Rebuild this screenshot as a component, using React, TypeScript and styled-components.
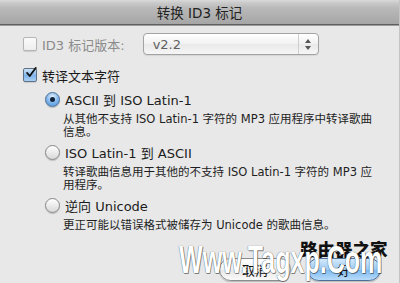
import React from "react";
import styled, { createGlobalStyle } from "styled-components";

const GlobalStyle = createGlobalStyle`
html,body{margin:0;padding:0;background:#e8e8e8;}
body{font-family:"DejaVu Sans","Noto Sans CJK SC",sans-serif;color:#1b1b1b;}
`
const Window = styled.div`
position:relative;
width:400px;
height:283px;
overflow:hidden;
background:#e8e8e8;
border-right:1px solid #c4c4c4;
box-sizing:border-box;
`
const TitleBar = styled.div`
height:24px;
display:flex;
align-items:center;
justify-content:center;
font-size:13.5px;
color:#222;
background:linear-gradient(#d9d9d9 0,#c9c9c9 3px,#b9b9b9 8px,#a6a6a6 100%);
border-bottom:1px solid #5e5e5e;
box-shadow:0 1px 0 #9c9c9c;
`
const Body = styled.div`
display:flex;
flex-direction:column;
padding:8px 0 0 23px;
`
const Row = styled.div<{gap?:number;top?:number}>`
display:flex;
align-items:center;
height:${p=>p.gap?22:18}px;
margin-top:${p=>p.top||0}px;
font-size:13px;
`
const Label = styled.span<{disabled?:boolean}>`
margin-left:5px;
color:${p=>p.disabled?'#8b8b8b':'#1b1b1b'};
`
const Box = styled.span<{disabled?:boolean;checked?:boolean}>`
width:14px;
height:14px;
box-sizing:border-box;
border-radius:2px;
display:inline-flex;
align-items:center;
justify-content:center;
border:1px solid ${p=>p.disabled?'#b5b5b5':'#5f6f86'};
background:${p=>p.checked?'linear-gradient(#cfe4fa,#7eb4ea 55%,#a9d0f5)':p.disabled?'linear-gradient(#fafafa,#eeeeee)':'linear-gradient(#ffffff,#e4e4e4)'};
box-shadow:0 1px 1px rgba(0,0,0,.12);
`
const Select = styled.div`
margin-left:18px;
width:176px;
height:22px;
box-sizing:border-box;
border:1px solid #a3a3a3;
border-radius:4px;
background:linear-gradient(#ffffff,#f1f1f1 50%,#e9e9e9 51%,#f6f6f6);
display:flex;
align-items:center;
color:#5f5f5f;
font-size:13px;
box-shadow:0 1px 1px rgba(0,0,0,.08);
`
const SelectValue = styled.span`
flex:1;
padding-left:9px;
`
const Stepper = styled.span`
width:19px;
height:100%;
border-left:1px solid #cfcfcf;
display:flex;
align-items:center;
justify-content:center;
`
const Options = styled.div`
display:flex;
flex-direction:column;
padding-left:22px;
`
const Radio = styled.span<{selected?:boolean}>`
width:15px;
height:15px;
box-sizing:border-box;
border-radius:50%;
display:inline-flex;
align-items:center;
justify-content:center;
border:1px solid ${p=>p.selected?'#4d6f95':'#878787'};
background:${p=>p.selected?'radial-gradient(circle at 50% 30%,#e3f0fc,#74aee9 60%,#4c8fd8)':'linear-gradient(#ffffff,#d8d8d8)'};
box-shadow:0 1px 1px rgba(0,0,0,.18);
&::after{
  content:'';
  width:5px;
  height:5px;
  border-radius:50%;
  background:#10233c;
  display:${p=>p.selected?'block':'none'};
}
`
const Desc = styled.div<{top:number}>`
margin:${p=>p.top}px 0 0 18px;
font-size:11.5px;
line-height:13px;
width:320px;
color:#1e1e1e;
`
const Footer = styled.div`
display:flex;
justify-content:flex-end;
gap:16px;
padding-right:18px;
margin-top:26px;
`
const Button = styled.div<{primary?:boolean}>`
width:${p=>p.primary?74:72}px;
height:23px;
box-sizing:border-box;
border-radius:12px;
border:1px solid ${p=>p.primary?'#4f6f97':'#8c8c8c'};
background:${p=>p.primary?'linear-gradient(#d5e9fb,#9ccbf3 50%,#7bb8ef 51%,#b8dcfa)':'linear-gradient(#ffffff,#f2f2f2 50%,#e6e6e6 51%,#fafafa)'};
display:flex;
align-items:center;
justify-content:center;
font-size:13px;
color:#111;
box-shadow:0 1px 1px rgba(0,0,0,.2);
`
const MarkCn = styled.div`
position:absolute;
left:300px;
top:239px;
font-family:"Noto Sans CJK SC",sans-serif;
font-weight:900;
font-size:17.5px;
line-height:20px;
color:#111;
`
const MarkEn = styled.div`
position:absolute;
left:179px;
top:240px;
font-family:"Liberation Sans",sans-serif;
font-weight:700;
font-size:38px;
line-height:40px;
color:#fff;
transform:scaleX(.66);
transform-origin:left top;
text-shadow:0 0 1px #333,1px 1px 0 rgba(0,0,0,.45);
white-space:nowrap;
`

const Check = () => (
  <svg width="14" height="14" viewBox="0 0 14 14" style={{position:'relative',top:-2,left:1}}>
    <path d="M2.5 7 L5.5 10.5 L12.5 1.2" fill="none" stroke="#111" strokeWidth="2.2" strokeLinecap="round" strokeLinejoin="round"/>
  </svg>
)

const Arrows = () => (
  <svg width="8" height="13" viewBox="0 0 8 13">
    <path d="M4 1 L7 5 L1 5 Z" fill="#555"/>
    <path d="M4 12 L7 8 L1 8 Z" fill="#555"/>
  </svg>
)

const App = () => {
  return (
    <Window>
      <GlobalStyle/>
      <TitleBar>转换 ID3 标记</TitleBar>
      <Body>
        <Row gap={1}>
          <Box disabled/>
          <Label disabled>ID3 标记版本:</Label>
          <Select>
            <SelectValue>v2.2</SelectValue>
            <Stepper><Arrows/></Stepper>
          </Select>
        </Row>
        <Row top={11}>
          <Box checked><Check/></Box>
          <Label>转译文本字符</Label>
        </Row>
        <Options>
          <Row top={6}>
            <Radio selected/>
            <Label>ASCII 到 ISO Latin-1</Label>
          </Row>
          <Desc top={5}>从其他不支持 ISO Latin-1 字符的 MP3 应用程序中转译歌曲信息。</Desc>
          <Row top={4}>
            <Radio/>
            <Label>ISO Latin-1 到 ASCII</Label>
          </Row>
          <Desc top={5}>转译歌曲信息用于其他的不支持 ISO Latin-1 字符的 MP3 应用程序。</Desc>
          <Row top={4}>
            <Radio/>
            <Label>逆向 Unicode</Label>
          </Row>
          <Desc top={5}>更正可能以错误格式被储存为 Unicode 的歌曲信息。</Desc>
        </Options>
      </Body>
      <Footer>
        <Button>取消</Button>
        <Button primary>好</Button>
      </Footer>
      <MarkCn>路由器之家</MarkCn>
      <MarkEn>Www.Tagxp.Com</MarkEn>
    </Window>
  )
}
export default App
